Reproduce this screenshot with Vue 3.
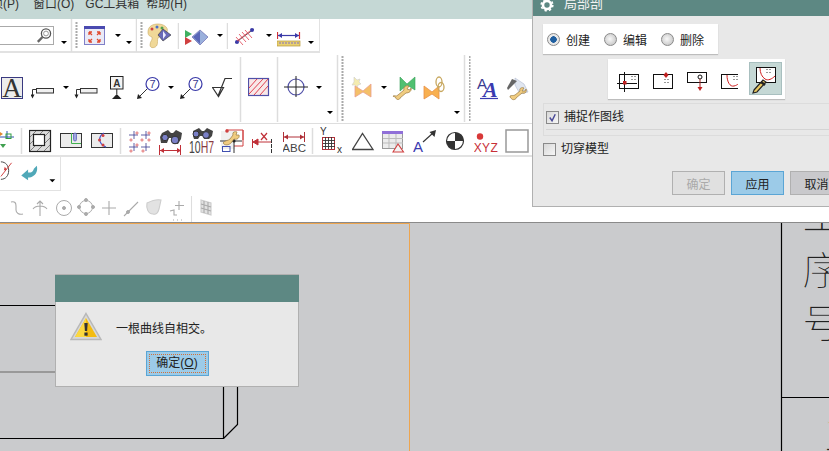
<template>
  <div class="app">
    <!-- Menu -->
    <div class="menubar">
      <span class="menu-first">项(P)</span>
      <span class="menu-win">窗口(O)</span>
      <span class="menu-gc">GC工具箱</span>
      <span class="menu-help">帮助(H)</span>
    </div>

    <!-- Ribbon rows: every svg uses page x/y in its viewBox, widths add up along the row -->
    <div class="ribbon">
      <div class="row row1">
        <div class="search"><svg width="16" height="17" viewBox="0 0 16 17"><circle cx="10" cy="6.5" r="4.6" fill="#fff" stroke="#555" stroke-width="1.3"/><circle cx="10" cy="6.5" r="2.4" fill="none" stroke="#999"/><path d="M6.5 10 1.8 14.8" stroke="#666" stroke-width="2.4"/></svg></div>
        <svg width="83" viewBox="55 19 83 33">
          <path d="M62 41h6l-3 3z"/>
          <path d="M72.500 19v33" stroke="#ddd" stroke-width="1.500"/>
          <path d="M77.500 22v26" stroke="#aaa" stroke-width="2" stroke-dasharray="2 1"/>
          <rect x="85.500" y="26.500" width="20" height="18" fill="#eaeaf6" stroke="#8080c8"/>
          <rect x="85" y="26" width="21" height="3" fill="#4a4ab0"/>
          <path d="M90 32l3 3m-3-3h3m-3 0v3M101 32l-3 3m3-3h-3m3 0v3M90 42l3-3m-3 3h3m-3 0v-3M101 42l-3-3m3 3h-3m3 0v-3" stroke="#e04a30" stroke-width="1.300" fill="none"/>
          <path d="M116 34h6l-3 3zM127 41h6l-3 3z"/>
          <path d="M137.500 19v33" stroke="#ddd" stroke-width="1.500"/>
        </svg>
        <svg width="42" viewBox="138 19 42 33">
          <path d="M142.500 22v26" stroke="#aaa" stroke-width="2" stroke-dasharray="2 1"/>
          <path d="M149 32c0-6 5-8 10-8s11 3 9 8c-1 4-7 3-9 6-1 2 0 5-1 7-1 3-7 4-7 0 0-4 3-5 2-8-2-1-4-1-4-5z" fill="#f0d898" stroke="#c8a860" stroke-width=".6"/>
          <circle cx="153" cy="29" r="1.500" fill="#d04040"/><circle cx="158" cy="27" r="1.500" fill="#4a70c8"/><circle cx="163" cy="28" r="1.500" fill="#50a050"/>
          <path d="M164 29l8 6-8 6-5-6z" fill="#6a6ab8" stroke="#333" stroke-width=".6"/>
          <path d="M164 31l3 4-3 4z" fill="#eef"/>
          <path d="M179.500 23v26" stroke="#ddd" stroke-width="1.500"/>
        </svg>
        <svg width="49" viewBox="180 19 49 33">
          <path d="M186 30l7 4-7 4z" fill="#3fb060"/><path d="M186 37l7 4-7 4z" fill="#d04040"/>
          <path d="M201 30l8 7-8 8-8-8z" fill="#9ab0dc" stroke="#6a6ab0" stroke-width=".7"/>
          <path d="M201 31v13l-7-7z" fill="#5a68b8"/>
          <path d="M218 34h6l-3 3z"/>
          <path d="M228.500 23v26" stroke="#ddd" stroke-width="1.500"/>
        </svg>
        <svg width="49" viewBox="229 19 49 33">
          <path d="M236 43l19-14" stroke="#5a5a60" stroke-width="1"/>
          <circle cx="238" cy="42" r="2" fill="#3a3aa8"/><circle cx="253" cy="30" r="2" fill="#3a3aa8"/>
          <path d="M237 37l7 8M240 34l7 8M243 32l7 8M246 30l7 8M238 41l13-10" stroke="#e04050" stroke-width=".8"/>
          <path d="M267 34h6l-3 3z"/>
        </svg>
        <svg width="42" viewBox="278 19 42 33">
          <path d="M278.500 32v7M300.500 32v7" stroke="#d03038" stroke-width="1.200"/>
          <path d="M279 35.500h21" stroke="#3a3aa8" stroke-width="1.200"/>
          <path d="M279 35.500l4-2.500v5zM300 35.500l-4-2.500v5z" fill="#3a3aa8"/>
          <rect x="278" y="41" width="23" height="5" fill="#e8d070" stroke="#b89838" stroke-width=".7"/>
          <path d="M281 42v2M284 42v2M287 42v2M290 42v2M293 42v2M296 42v2M299 42v2" stroke="#8070c0"/>
          <path d="M309 41h6l-3 3z"/>
        </svg>
      </div>

      <div class="row row2">
        <svg width="31" viewBox="0 53 31 69">
          <rect x="1.500" y="77.500" width="21" height="21" fill="#ececec" stroke="#3a3a80"/>
          <text x="12" y="97" text-anchor="middle" class="icon-serif">A</text>
        </svg>
        <svg width="43" viewBox="31 53 43 69">
          <path d="M32.500 97V89.500H36" fill="none" stroke="#333"/>
          <path d="M30.500 94.500h4l-2 4z" fill="#222"/>
          <rect x="36.500" y="88.500" width="17" height="4.500" fill="#f0f0f0" stroke="#333"/>
          <path d="M63 86h6l-3 3z"/>
        </svg>
        <svg width="36" viewBox="74 53 36 69">
          <path d="M76.500 97V89.500H80" fill="none" stroke="#333"/>
          <path d="M74.500 94.500h4l-2 4z" fill="#222"/>
          <rect x="80.500" y="88.500" width="16.500" height="4.500" fill="#f0f0f0" stroke="#333"/>
        </svg>
        <svg width="27" viewBox="110 53 27 69">
          <rect x="110.500" y="76.500" width="12.500" height="12.500" fill="#f4f4f4" stroke="#222"/>
          <text x="116.800" y="86.500" text-anchor="middle" class="icon-small">A</text>
          <path d="M116.800 89v5" stroke="#222"/>
          <path d="M112 99l4.800-5 4.800 5z" fill="#222"/>
        </svg>
        <svg width="43" viewBox="137 53 43 69">
          <circle cx="152.500" cy="84" r="6.500" fill="#fff" stroke="#3a3aa8" stroke-width="1.200"/>
          <text x="152.500" y="88" text-anchor="middle" class="icon-num">7</text>
          <path d="M147 89l-8 8" stroke="#333"/>
          <path d="M137 99l1-5 4 4z" fill="#222"/>
          <path d="M168 86h6l-3 3z"/>
        </svg>
        <svg width="32" viewBox="180 53 32 69">
          <circle cx="195.500" cy="84" r="6.500" fill="#fff" stroke="#3a3aa8" stroke-width="1.200"/>
          <text x="195.500" y="88" text-anchor="middle" class="icon-num">7</text>
          <path d="M190 89l-8 8" stroke="#333"/>
          <path d="M180 99l1-5 4 4z" fill="#222"/>
        </svg>
        <svg width="36" viewBox="212 53 36 69">
          <path d="M212.500 87.500h11l-5 9zM218 96l7-17.500h7" fill="none" stroke="#333" stroke-width="1.200"/>
          <path d="M240.500 57v65" stroke="#ddd" stroke-width="1.500"/>
        </svg>
        <svg width="36" viewBox="248 53 36 69">
          <rect x="248.500" y="78.500" width="20" height="17" fill="#f8e8e8" stroke="#5050a8" stroke-width="1.200"/>
          <path d="M249 88l8-9M249 94l14-15M254 95l14-16M260 95l8-9" stroke="#e04050"/>
          <path d="M277.500 57v65" stroke="#ddd" stroke-width="1.500"/>
        </svg>
        <svg width="66" viewBox="284 53 66 69">
          <circle cx="296" cy="87" r="8" fill="none" stroke="#5050a8" stroke-width="1.200"/>
          <path d="M284 87h24M296 76v21" stroke="#222"/>
          <path d="M316 86h6l-3 3zM327 111h6l-3 3z"/>
          <path d="M337.500 55v67" stroke="#ddd" stroke-width="1.500"/>
          <path d="M342.500 56v66" stroke="#aaa" stroke-width="2" stroke-dasharray="2 1"/>
        </svg>
        <svg width="42" viewBox="350 53 42 69">
          <path d="M354 77l3 3 3-1-1 3 2 2-3 1-1 3-2-3-3 0 2-3z" fill="#f4ecb0" stroke="#ccc" stroke-width=".6"/>
          <path d="M355 86l8 5 8-7v13l-8-5-8 5z" fill="#f4c068" stroke="#e8a090" stroke-width=".8"/>
          <path d="M381 86h6l-3 3z"/>
        </svg>
        <svg width="31" viewBox="392 53 31 69">
          <path d="M400 77l7 7 8-7v13l-8-5-7 6z" fill="#50c070" stroke="#38a058" stroke-width=".6"/>
          <path d="M393 96c2-1 3 1 5-1l6-5c-1-3 2-5 5-4l-2 3 3 1 1-2c1 3-2 5-5 5l-6 5c0 2-4 2-4 0-1-2-3-1-3-2z" fill="#f0cc80" stroke="#9a7a40" stroke-width=".7"/>
        </svg>
        <svg width="46" viewBox="423 53 46 69">
          <path d="M424 86l8 6 7-6v13l-7-5-8 5z" fill="#f8b050" stroke="#e89048" stroke-width=".8"/>
          <ellipse cx="439" cy="82" rx="3" ry="5" fill="none" stroke="#c8a860" stroke-width="1.300"/>
          <ellipse cx="441" cy="87" rx="3" ry="4.500" fill="none" stroke="#c8a860" stroke-width="1.300"/>
          <path d="M454 111h6l-3 3z"/>
          <path d="M464.500 55v67" stroke="#ddd" stroke-width="1.500"/>
        </svg>
        <svg width="29" viewBox="469 53 29 69">
          <path d="M469.500 56v66" stroke="#aaa" stroke-width="2" stroke-dasharray="2 1"/>
          <text x="477" y="89" class="icon-a1">A</text>
          <text x="483" y="97" class="icon-a2">A</text>
          <path d="M480 98.500h19" stroke="#3a3ab0" stroke-width="1.200"/>
        </svg>
        <svg width="34" viewBox="498 53 34 69">
          <path d="M515 78l9 6 4 8-8 2-5-9z" fill="#e0e6f0" stroke="#b0b8d0" stroke-width=".6"/>
          <path d="M507 88l5-9 5 2-6 6-3 3z" fill="#666"/>
          <path d="M510 96c2-1 3 0 5-1l5-4c-1-3 2-4 4-3l-2 3 3 0 1-2c1 3-1 5-4 4l-6 5c0 2-4 2-4 1-1-1-2-1-2-3z" fill="#f0cc80" stroke="#9a7a40" stroke-width=".7"/>
        </svg>
      </div>

      <div class="row row3">
        <svg width="29" viewBox="0 123 29 33">
          <path d="M0 136h14M7 130v7" stroke="#3050b0"/>
          <rect x="6" y="133" width="5" height="4.500" fill="none" stroke="#30a040"/>
          <path d="M0 131l3 2-3 2z" fill="#e08a30"/><path d="M0 143h6l-3 4z" fill="#40a050"/>
          <path d="M21.500 127v26" stroke="#ddd" stroke-width="1.500"/>
        </svg>
        <svg width="31" viewBox="29 123 31 33">
          <rect x="29.500" y="129.500" width="21" height="21" fill="#ddd" stroke="#222" stroke-width="1.200"/>
          <path d="M30 136l6-6M30 143l13-13M30 150l20-20M37 150l13-13M44 150l6-6" stroke="#555" stroke-width=".7"/>
          <rect x="33.500" y="133.500" width="11" height="11" fill="#fff" stroke="#222" stroke-width="1.200"/>
        </svg>
        <svg width="31" viewBox="60 123 31 33">
          <rect x="60.500" y="132.500" width="21" height="14" fill="#ececec" stroke="#333"/>
          <path d="M71.500 132v10.500H81" fill="none" stroke="#40b050"/>
          <rect x="73.500" y="132" width="3" height="8" rx="1.500" fill="#a0a8e0" stroke="#5058b8" stroke-width=".7"/>
        </svg>
        <svg width="37" viewBox="91 123 37 33">
          <rect x="91.500" y="132.500" width="21" height="14" fill="#ececec" stroke="#333"/>
          <path d="M104 132c-6 3-6 11 2 14" fill="none" stroke="#4050c8" stroke-width="1.200"/>
          <circle cx="103" cy="134.500" r="1.500" fill="#d04040"/><circle cx="99.500" cy="139" r="1.500" fill="#d04040"/><circle cx="103" cy="144" r="1.500" fill="#d04040"/>
          <path d="M120.500 127v26" stroke="#ddd" stroke-width="1.500"/>
        </svg>
        <svg width="31" viewBox="128 123 31 33">
          <path d="M134 130v8M129 134h9M146 130v8M141 134h9M134 142v8M129 146h9M146 142v8M141 146h9" stroke="#3a3a90" stroke-width=".8"/>
          <g fill="none" stroke="#d84040" stroke-width=".7"><circle cx="137" cy="132" r="1.100"/><circle cx="149" cy="132" r="1.100"/><circle cx="131" cy="139" r="1.100"/><circle cx="142" cy="139" r="1.100"/><circle cx="149" cy="139" r="1.100"/><circle cx="137" cy="144" r="1.100"/><circle cx="131" cy="150" r="1.100"/><circle cx="143" cy="150" r="1.100"/></g>
        </svg>
        <svg width="30" viewBox="159 123 30 33">
          <path d="M162 132l6-3 3 3h2l3-3 6 3-1 6-3 5h-5l-1-6h-3l-2 5h-6l-1-6z" fill="#444"/>
          <circle cx="165" cy="136.500" r="3.200" fill="#7a80c8" stroke="#333"/><circle cx="175" cy="139" r="3.800" fill="#7a80c8" stroke="#333"/>
          <path d="M160 149.500h21" stroke="#c03038"/>
          <path d="M159.500 144v10M180.500 144v10" stroke="#c03038"/>
          <path d="M160 149.500l4-2.500v5zM181 149.500l-4-2.500v5z" fill="#c03038"/>
        </svg>
        <svg width="31" viewBox="189 123 31 33">
          <path d="M193 130l6-3 3 3h2l3-3 6 3-1 5-3 3h-5l-1-3h-3l-2 3h-4l-1-3z" fill="#444"/>
          <circle cx="196" cy="133" r="3" fill="#7a80c8" stroke="#333"/><circle cx="206" cy="134" r="3.400" fill="#7a80c8" stroke="#333"/>
          <text x="189" y="152" textLength="25" lengthAdjust="spacingAndGlyphs" class="icon-h7">10<tspan fill="#8a3a40">H7</tspan></text>
        </svg>
        <svg width="32" viewBox="220 123 32 33">
          <rect x="221" y="130" width="14" height="18" fill="#f0f0f0"/>
          <path d="M226 129h17v16h-9M243 129v10" fill="none" stroke="#d04040"/>
          <path d="M220 140h22M234 131v21" stroke="#333"/>
          <circle cx="227" cy="130" r="1.800" fill="#d04040"/><circle cx="234" cy="140" r="1.600" fill="#222"/>
          <path d="M223 142c2-3 5-2 7-4l3-4c-1-3 2-4 4-3l-1 3 3 0c1 3-2 5-5 4l-3 4c-2 2-6 3-8 0z" fill="#f0cc80" stroke="#9a7a40" stroke-width=".7"/>
          <rect x="222.500" y="145.500" width="7.500" height="5" fill="none" stroke="#4050b0"/>
        </svg>
        <svg width="31" viewBox="252 123 31 33">
          <path d="M252.500 138v9" stroke="#c03038"/>
          <path d="M253 141h18M253 141l5-3v6z" fill="#c03038" stroke="#c03038"/>
          <path d="M261 132l6 7M267 132l-6 7" stroke="#c03038" stroke-width="1.200"/>
          <path d="M271.500 138v14" stroke="#333" stroke-dasharray="4 1"/>
        </svg>
        <svg width="37" viewBox="283 123 37 33">
          <path d="M283.500 131v10M304.500 131v10" stroke="#b03038"/>
          <path d="M284 136h20" stroke="#b03038"/>
          <path d="M284 136l4-2.500v5zM304 136l-4-2.500v5z" fill="#b03038"/>
          <text x="294.200" y="151" text-anchor="middle" class="icon-abc">ABC</text>
          <path d="M312.500 127v26" stroke="#ddd" stroke-width="1.500"/>
        </svg>
        <svg width="32" viewBox="320 123 32 33">
          <text x="320" y="134" class="icon-xy">Y</text>
          <rect x="322.500" y="136.500" width="12" height="12" fill="#fff" stroke="#b03038"/>
          <path d="M325.500 136v12M328.500 136v12M331.500 136v12M323 139.500h12M323 142.500h12M323 145.500h12" stroke="#333" stroke-width=".9"/>
          <text x="337" y="152" class="icon-xy">x</text>
        </svg>
        <svg width="30" viewBox="352 123 30 33">
          <path d="M352.500 148.500l10-16 10.500 16z" fill="none" stroke="#444" stroke-width="1.300"/>
        </svg>
        <svg width="31" viewBox="382 123 31 33">
          <rect x="382.500" y="130.500" width="20" height="17" fill="#ececec" stroke="#999"/>
          <rect x="382" y="130" width="21" height="3" fill="#9070d8"/>
          <path d="M389 133v14M396 133v14M383 137.500h20M383 142h20" stroke="#bbb"/>
          <path d="M393 151l5-8 5.500 8z" fill="#f4f4f4" stroke="#d04040" stroke-width="1.100"/>
        </svg>
        <svg width="32" viewBox="413 123 32 33">
          <text x="413" y="151" class="icon-a3">A</text>
          <path d="M423 141l10-9" stroke="#333" stroke-width="1.100"/>
          <path d="M436 129l-1.500 7-5-5z" fill="#333"/>
        </svg>
        <svg width="29" viewBox="445 123 29 33">
          <circle cx="455" cy="140" r="8.500" fill="#fff" stroke="#333" stroke-width="1.200"/>
          <path d="M455 140v-8.500a8.500 8.500 0 0 1 8.500 8.500zM455 140v8.500a8.500 8.500 0 0 1-8.500-8.500z" fill="#333"/>
        </svg>
        <svg width="31" viewBox="474 123 31 33">
          <circle cx="480" cy="135.500" r="3.200" fill="#d83838"/>
          <text x="486" y="151" text-anchor="middle" class="icon-xyz">XYZ</text>
        </svg>
        <svg width="27" viewBox="505 123 27 33">
          <rect x="506" y="129" width="22" height="22" fill="#fff" stroke="#999" stroke-width="1.500"/>
        </svg>
      </div>

      <div class="row row4">
        <svg width="61" viewBox="0 156 61 34">
          <path d="M0 161c5 0 8 4 8 9s-3 9-8 9" fill="none" stroke="#444"/>
          <path d="M0 176l11-14" stroke="#d04040"/>
          <path d="M3 170l3-1-2-3z" fill="#d04040"/>
          <path d="M21 175l7-6v3c4 0 5-1 6-4l3-3c1 4 0 8-3 10-2 2-4 2-6 2v3z" fill="#50a8b8"/>
          <path d="M50 179h6l-3 3z"/>
        </svg>
      </div>

      <div class="row row5">
        <svg width="200" viewBox="0 190 200 32" class="dim">
          <path d="M11 201c4-1 5 1 5 4v4c0 3 3 5 7 4"/>
          <path d="M33 208c3-4 11-4 14 0M40 200v15M37 203l3-3 3 3"/>
          <circle cx="64" cy="207" r="7.500" fill="none"/><circle cx="64" cy="207" r="1.500" fill="#aaa"/>
          <circle cx="86" cy="206" r="6.500" fill="none"/><circle cx="86" cy="199" r="1.500"/><circle cx="86" cy="213" r="1.500"/><circle cx="79" cy="206" r="1.500"/><circle cx="93" cy="206" r="1.500"/>
          <path d="M102 207h14M109 200v14"/>
          <path d="M124 215l14-14"/><circle cx="128" cy="211" r="1.500" fill="#aaa"/>
          <path class="dim-fill" d="M147 202c4-2 10-4 14-3l-2 9c-1 4-3 6-6 5-5 0-7-6-6-11z"/>
          <path d="M179 200v9M175 204.500h9M170 210l4-1v5h3M173 219h1M177 219h1M181 219h1"/>
          <path d="M191.500 195v28" stroke="#ddd" stroke-width="1.500"/>
        </svg>
        <svg width="16" viewBox="200 190 16 32" class="dim">
          <path class="dim-fill" d="M201 199l10 3v12l-10-3z"/>
          <path d="M201 203l10 3M201 207l10 3M204 200v12M208 201v12"/>
        </svg>
      </div>
    </div>

    <!-- Drawing sheet -->
    <div class="sheet">
      <svg class="sheet-art" width="829" height="228" viewBox="0 223 829 228">
        <path d="M0 223.500h409.500V451" fill="none" stroke="#eda54f"/>
        <path d="M0 305.500h56M0 438.500h223.500V387M237.500 387v37.500l-14 14" fill="none" stroke="#000" stroke-width="1.200"/>
        <path d="M0 372h56" stroke="#999" stroke-width="2"/>
        <path d="M781.500 223v228M781 397.500h48" stroke="#000" stroke-width="1.200"/>
        <text x="802" y="285" class="cad-text">序</text>
        <text x="802" y="338" class="cad-text">号</text>
        <text x="802" y="230" class="cad-text">工</text>
        <text x="824" y="450" class="cad-text">工</text>
      </svg>
    </div>

    <!-- Section dialog -->
    <div class="dlg section-dlg">
      <div class="dlg-title">
        <svg width="14" height="14" viewBox="0 0 14 14"><circle cx="7" cy="7" r="4" fill="none" stroke="#fff" stroke-width="2.600"/><circle cx="7" cy="7" r="5.800" fill="none" stroke="#fff" stroke-width="1.600" stroke-dasharray="2.300 2.250"/></svg>
        <span>局部剖</span>
      </div>
      <div class="panel radios">
        <label class="radio on"><i></i>创建</label>
        <label class="radio"><i></i>编辑</label>
        <label class="radio"><i></i>删除</label>
      </div>
      <div class="panel tools">
        <svg width="34" height="40" viewBox="607 59 34 40">
          <rect x="618.500" y="74.500" width="19" height="14" fill="#fff" stroke="#111"/>
          <path d="M616 83.500h20M623.500 72v20" stroke="#111"/>
          <rect x="622" y="81" width="3.500" height="3.500" fill="#c02020"/>
          <path d="M631 76v1M634 76v1M631 79v1M634 79v1" stroke="#333"/>
        </svg>
        <svg width="34" height="40" viewBox="641 59 34 40">
          <rect x="652.500" y="74.500" width="19" height="14" fill="#fff" stroke="#111"/>
          <path d="M665 72l-2.500 3 2.500 3 2.500-3z" fill="#c02020"/>
          <path d="M664 79v1M667 79v1M664 82v1M667 82v1" stroke="#333"/>
        </svg>
        <svg width="34" height="40" viewBox="675 59 34 40">
          <rect x="686.500" y="72.500" width="19" height="10" fill="#fff" stroke="#111"/>
          <circle cx="699" cy="77" r="2" fill="none" stroke="#111"/>
          <path d="M699 79v10" stroke="#a02020"/>
          <path d="M696.500 87h5l-2.500 4z" fill="#c02020"/>
        </svg>
        <svg width="28" height="40" viewBox="709 59 28 40">
          <rect x="720.500" y="74.500" width="19" height="14" fill="#fff" stroke="#111"/>
          <path d="M726 75c0 7 3 12 7 11s5-3 6-4" fill="none" stroke="#d02020"/>
          <path d="M733 76v1M736 76v1M733 79v1M736 79v1" stroke="#333"/>
        </svg>
        <svg class="tool-on" width="33" height="33" viewBox="748 65 33 33">
          <rect x="755.500" y="70.500" width="19" height="15" fill="#fff" stroke="#111"/>
          <path d="M759 71c0 5 2 9 5 11s7 0 10-3" fill="none" stroke="#d02020"/>
          <path d="M766 72v1M769 72v1M766 75v1M769 75v1" stroke="#333"/>
          <path d="M753 93l9-10 3 2-9 10-4 1z" fill="#e8c860" stroke="#222" stroke-width="1.200"/>
          <path d="M760 85l4 3" stroke="#222" stroke-width="2.400"/>
        </svg>
      </div>
      <div class="group">
        <label class="check on"><i><svg width="11" height="11" viewBox="0 0 12 12"><path d="M3 6l2.500 3.500L9 2.500" fill="none" stroke="#4a4a98" stroke-width="1.600"/></svg></i>捕捉作图线</label>
      </div>
      <label class="check plain"><i></i>切穿模型</label>
      <div class="dlg-buttons">
        <button class="btn off">确定</button>
        <button class="btn active">应用</button>
        <button class="btn">取消</button>
      </div>
    </div>

    <!-- Message box -->
    <div class="dlg msg-dlg">
      <div class="msg-head"></div>
      <div class="msg-body">
        <svg width="32" height="30" viewBox="0 0 32 30">
          <path d="M16 1.500 31 27.500H1z" fill="#d8d8d8" stroke="#b8b8b8" stroke-width="1.500"/>
          <path d="M16 6 27 25H5z" fill="#f4bc10"/>
          <path d="M16 6v19H5z" fill="#fbd840"/>
          <path d="M14.300 11h3.400l-.6 8h-2.200z" fill="#333"/>
          <rect x="14.400" y="20.500" width="3.200" height="3.200" fill="#333"/>
        </svg>
        <span>一根曲线自相交。</span>
      </div>
      <button class="btn active msg-ok"><span>确定(<u>O</u>)</span></button>
    </div>
  </div>
</template>

<script setup>
</script>

<style>
html, body { margin: 0; padding: 0; overflow: hidden; }
</style>

<style scoped>
.app {
  position: relative;
  width: 829px;
  height: 451px;
  overflow: hidden;
  display: flex;
  flex-direction: column;
  background: #fff;
  color: #222;
  font-family: "Liberation Sans", "Noto Sans CJK SC", sans-serif;
  font-size: 12px;
}

.menubar {
  height: 19px;
  flex-shrink: 0;
  display: flex;
  background: #c5d8d5;
  line-height: 8px;
  white-space: nowrap;
  overflow: hidden;
  color: #333;
}
.menu-first { margin-left: -9px; }
.menu-win { margin-left: 14px; }
.menu-gc { margin-left: 11px; }
.menu-help { margin-left: 7px; }

.ribbon {
  height: 203px;
  flex-shrink: 0;
  display: flex;
  flex-direction: column;
}
.row { display: flex; flex-shrink: 0; box-sizing: border-box; }
.row svg { display: block; flex-shrink: 0; }

.row1 { width: 320px; height: 34px; border-bottom: 2px solid #e2e2e2; border-right: 1px solid #e2e2e2; }
.row1 svg { height: 33px; }
.search {
  width: 55px;
  height: 19px;
  margin-top: 7px;
  box-sizing: border-box;
  border: 1px solid #aaa;
  border-left: none;
  display: flex;
  justify-content: flex-end;
  align-items: center;
  padding-right: 1px;
}
.search svg { height: 17px; }

.row2 { width: 532px; height: 70px; }
.row2 svg { height: 69px; }
.row3 { width: 532px; height: 34px; border-top: 1px solid #dedede; border-bottom: 2px solid #e2e2e2; }
.row3 svg { height: 33px; }
.row4 { width: 61px; height: 34px; border-bottom: 1px solid #e2e2e2; border-right: 1px solid #e2e2e2; }
.row4 svg { height: 33px; }
.row5 { height: 32px; }
.row5 svg { height: 32px; }

.dim { fill: #aaa; stroke: #aaa; }
.dim path { stroke-width: 1.100; fill: none; }
.dim .dim-fill { fill: #e2e2e2; stroke: #ccc; }

.icon-serif { font: 400 27px "Liberation Serif", serif; fill: #333; }
.icon-small { font: 700 10px "Liberation Sans", sans-serif; fill: #333; }
.icon-num { font: 400 11px "Liberation Sans", sans-serif; fill: #3a3a90; }
.icon-a1 { font: 400 15px "Liberation Sans", sans-serif; fill: #3a3a90; }
.icon-a2 { font: italic 700 22px "Liberation Serif", serif; fill: #3a3ab0; }
.icon-a3 { font: 400 15px "Liberation Sans", sans-serif; fill: #3a3ab0; }
.icon-h7 { font: 400 16px "Liberation Sans", sans-serif; fill: #444; }
.icon-abc { font: 400 11.500px "Liberation Sans", sans-serif; fill: #444; }
.icon-xy { font: 400 10px "Liberation Sans", sans-serif; fill: #333; }
.icon-xyz { font: 400 12px "Liberation Sans", sans-serif; fill: #c83038; letter-spacing: .4px; }

.sheet {
  flex: 1;
  min-height: 0;
  background: #cacbcd;
  border-top: 1px solid #8a8a8a;
  overflow: hidden;
}
.sheet-art { display: block; }
.cad-text {
  font: 400 40px "Noto Sans CJK SC", sans-serif;
  fill: #222;
  stroke: #cacbcd;
  stroke-width: 1.600px;
  paint-order: fill stroke;
}

.dlg {
  position: absolute;
  box-sizing: border-box;
  background: #e8e8e8;
  border: 1px solid #b0b0b0;
  display: flex;
  flex-direction: column;
}

.section-dlg {
  left: 532px;
  top: -1px;
  width: 320px;
  height: 208px;
  border-top: none;
}
.dlg-title {
  height: 17px;
  flex-shrink: 0;
  background: #5d8883;
  color: #f2f2f2;
  display: flex;
  align-items: flex-start;
  overflow: hidden;
  font-size: 13px;
  line-height: 10px;
  padding-left: 7px;
  gap: 10px;
}
.dlg-title svg { margin-top: -1px; flex-shrink: 0; }

.panel {
  background: #fff;
  box-shadow: 0 1px 1px #bdbdbd;
  display: flex;
  align-items: center;
}
.radios {
  width: 175px;
  height: 30px;
  margin: 8px 0 0 10px;
  box-sizing: border-box;
  padding-left: 4px;
  gap: 14px;
}
.radio { display: flex; align-items: center; gap: 6px; }
.radio i {
  width: 13px;
  height: 13px;
  box-sizing: border-box;
  border-radius: 50%;
  border: 1px solid #8a8a8a;
  background: radial-gradient(circle at 45% 45%, #f8f8f8, #bbb);
}
.radio.on i { background: radial-gradient(circle, #1f5fa0 0 3px, #e8e8e8 3.500px); }

.tools {
  width: 177px;
  height: 40px;
  margin: 5px 0 0 75px;
}
.tools svg { display: block; flex-shrink: 0; }
.tool-on {
  margin-left: 11px;
  margin-top: -1px;
  background: #c5d8d5;
  outline: 1px solid #a8bfbf;
  outline-offset: -1px;
}

.group {
  width: 310px;
  height: 33px;
  margin: 4px 0 0 10px;
  box-sizing: border-box;
  border: 1px solid #dcdcdc;
  padding: 7px 0 0 2px;
  flex-shrink: 0;
}
.group::after {
  content: "";
  display: block;
  height: 1px;
  background: #d4d4d4;
  margin-top: 5px;
}
.check { display: flex; align-items: center; gap: 5px; height: 13px; line-height: 13px; }
.check i {
  width: 13px;
  height: 13px;
  box-sizing: border-box;
  border: 1px solid #8a8a8a;
  background: linear-gradient(135deg, #d8d8d8, #f6f6f6);
  display: block;
  flex-shrink: 0;
}
.check.on svg { display: block; }
.plain { margin: 7px 0 0 10px; }

.dlg-buttons {
  display: flex;
  gap: 6px;
  margin: 15px 0 0 139px;
}
.btn {
  width: 53px;
  height: 24px;
  box-sizing: border-box;
  flex-shrink: 0;
  padding: 0;
  border: 1px solid #b0b0b0;
  background: #c9c9cc;
  color: #222;
  font: 12px "Liberation Sans", "Noto Sans CJK SC", sans-serif;
}
.btn.off { background: #e0e0e0; color: #aaa; }
.btn.active { background: #9ccbe8; border-color: #5aa5d5; }

.msg-dlg {
  left: 55px;
  top: 274px;
  width: 244px;
  height: 113px;
  align-items: center;
}
.msg-head {
  align-self: stretch;
  height: 27px;
  background: #5d8883;
  margin: 0 -1px;
  flex-shrink: 0;
}
.msg-body {
  align-self: stretch;
  display: flex;
  align-items: center;
  gap: 14px;
  padding: 10px 0 0 14px;
}
.msg-ok {
  width: 63px;
  height: 25px;
  margin-top: 9px;
  padding: 2px;
}
.msg-ok span {
  display: block;
  height: 100%;
  box-sizing: border-box;
  border: 1px dotted #d2703a;
  line-height: 17px;
}
</style>
